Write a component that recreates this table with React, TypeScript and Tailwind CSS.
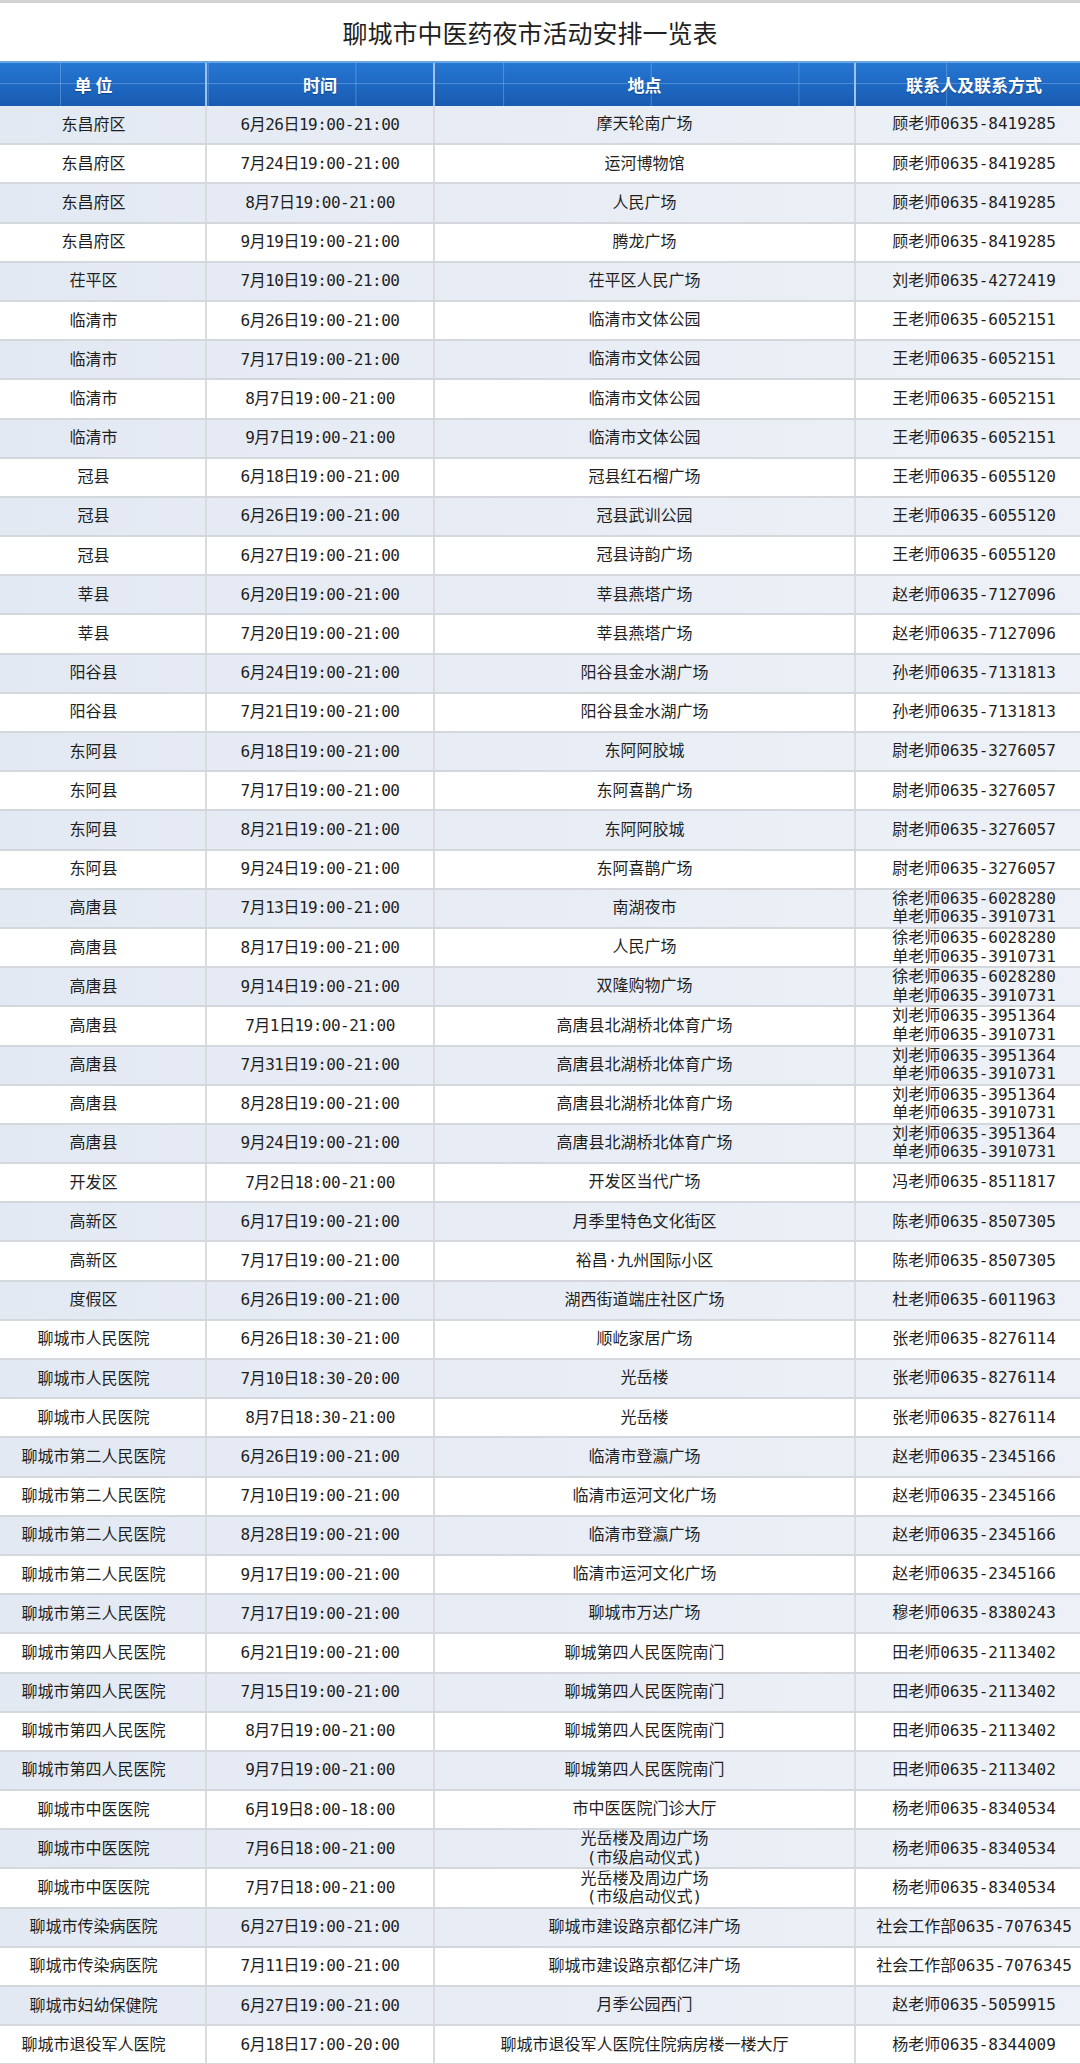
import React from "react";

type Row = [string, string, string, string];

const rows: Row[] = [
  ["东昌府区", "6月26日19:00-21:00", "摩天轮南广场", "顾老师0635-8419285"],
  ["东昌府区", "7月24日19:00-21:00", "运河博物馆", "顾老师0635-8419285"],
  ["东昌府区", "8月7日19:00-21:00", "人民广场", "顾老师0635-8419285"],
  ["东昌府区", "9月19日19:00-21:00", "腾龙广场", "顾老师0635-8419285"],
  ["茌平区", "7月10日19:00-21:00", "茌平区人民广场", "刘老师0635-4272419"],
  ["临清市", "6月26日19:00-21:00", "临清市文体公园", "王老师0635-6052151"],
  ["临清市", "7月17日19:00-21:00", "临清市文体公园", "王老师0635-6052151"],
  ["临清市", "8月7日19:00-21:00", "临清市文体公园", "王老师0635-6052151"],
  ["临清市", "9月7日19:00-21:00", "临清市文体公园", "王老师0635-6052151"],
  ["冠县", "6月18日19:00-21:00", "冠县红石榴广场", "王老师0635-6055120"],
  ["冠县", "6月26日19:00-21:00", "冠县武训公园", "王老师0635-6055120"],
  ["冠县", "6月27日19:00-21:00", "冠县诗韵广场", "王老师0635-6055120"],
  ["莘县", "6月20日19:00-21:00", "莘县燕塔广场", "赵老师0635-7127096"],
  ["莘县", "7月20日19:00-21:00", "莘县燕塔广场", "赵老师0635-7127096"],
  ["阳谷县", "6月24日19:00-21:00", "阳谷县金水湖广场", "孙老师0635-7131813"],
  ["阳谷县", "7月21日19:00-21:00", "阳谷县金水湖广场", "孙老师0635-7131813"],
  ["东阿县", "6月18日19:00-21:00", "东阿阿胶城", "尉老师0635-3276057"],
  ["东阿县", "7月17日19:00-21:00", "东阿喜鹊广场", "尉老师0635-3276057"],
  ["东阿县", "8月21日19:00-21:00", "东阿阿胶城", "尉老师0635-3276057"],
  ["东阿县", "9月24日19:00-21:00", "东阿喜鹊广场", "尉老师0635-3276057"],
  ["高唐县", "7月13日19:00-21:00", "南湖夜市", "徐老师0635-6028280\n单老师0635-3910731"],
  ["高唐县", "8月17日19:00-21:00", "人民广场", "徐老师0635-6028280\n单老师0635-3910731"],
  ["高唐县", "9月14日19:00-21:00", "双隆购物广场", "徐老师0635-6028280\n单老师0635-3910731"],
  ["高唐县", "7月1日19:00-21:00", "高唐县北湖桥北体育广场", "刘老师0635-3951364\n单老师0635-3910731"],
  ["高唐县", "7月31日19:00-21:00", "高唐县北湖桥北体育广场", "刘老师0635-3951364\n单老师0635-3910731"],
  ["高唐县", "8月28日19:00-21:00", "高唐县北湖桥北体育广场", "刘老师0635-3951364\n单老师0635-3910731"],
  ["高唐县", "9月24日19:00-21:00", "高唐县北湖桥北体育广场", "刘老师0635-3951364\n单老师0635-3910731"],
  ["开发区", "7月2日18:00-21:00", "开发区当代广场", "冯老师0635-8511817"],
  ["高新区", "6月17日19:00-21:00", "月季里特色文化街区", "陈老师0635-8507305"],
  ["高新区", "7月17日19:00-21:00", "裕昌·九州国际小区", "陈老师0635-8507305"],
  ["度假区", "6月26日19:00-21:00", "湖西街道端庄社区广场", "杜老师0635-6011963"],
  ["聊城市人民医院", "6月26日18:30-21:00", "顺屹家居广场", "张老师0635-8276114"],
  ["聊城市人民医院", "7月10日18:30-20:00", "光岳楼", "张老师0635-8276114"],
  ["聊城市人民医院", "8月7日18:30-21:00", "光岳楼", "张老师0635-8276114"],
  ["聊城市第二人民医院", "6月26日19:00-21:00", "临清市登瀛广场", "赵老师0635-2345166"],
  ["聊城市第二人民医院", "7月10日19:00-21:00", "临清市运河文化广场", "赵老师0635-2345166"],
  ["聊城市第二人民医院", "8月28日19:00-21:00", "临清市登瀛广场", "赵老师0635-2345166"],
  ["聊城市第二人民医院", "9月17日19:00-21:00", "临清市运河文化广场", "赵老师0635-2345166"],
  ["聊城市第三人民医院", "7月17日19:00-21:00", "聊城市万达广场", "穆老师0635-8380243"],
  ["聊城市第四人民医院", "6月21日19:00-21:00", "聊城第四人民医院南门", "田老师0635-2113402"],
  ["聊城市第四人民医院", "7月15日19:00-21:00", "聊城第四人民医院南门", "田老师0635-2113402"],
  ["聊城市第四人民医院", "8月7日19:00-21:00", "聊城第四人民医院南门", "田老师0635-2113402"],
  ["聊城市第四人民医院", "9月7日19:00-21:00", "聊城第四人民医院南门", "田老师0635-2113402"],
  ["聊城市中医医院", "6月19日8:00-18:00", "市中医医院门诊大厅", "杨老师0635-8340534"],
  ["聊城市中医医院", "7月6日18:00-21:00", "光岳楼及周边广场\n(市级启动仪式)", "杨老师0635-8340534"],
  ["聊城市中医医院", "7月7日18:00-21:00", "光岳楼及周边广场\n(市级启动仪式)", "杨老师0635-8340534"],
  ["聊城市传染病医院", "6月27日19:00-21:00", "聊城市建设路京都亿沣广场", "社会工作部0635-7076345"],
  ["聊城市传染病医院", "7月11日19:00-21:00", "聊城市建设路京都亿沣广场", "社会工作部0635-7076345"],
  ["聊城市妇幼保健院", "6月27日19:00-21:00", "月季公园西门", "赵老师0635-5059915"],
  ["聊城市退役军人医院", "6月18日17:00-20:00", "聊城市退役军人医院住院病房楼一楼大厅", "杨老师0635-8344009"],
];

function Lines({ text }: { text: string }) {
  const parts = text.split("\n");
  return (
    <div className="flex flex-col items-center leading-[18.5px]">
      {parts.map((p, i) => (
        <span key={i} className="whitespace-nowrap">
          {p}
        </span>
      ))}
    </div>
  );
}

export default function App() {
  return (
    <div className="w-[1080px] bg-white text-[#1f1f1f] font-['DejaVu_Sans_Mono','Noto_Sans_CJK_SC',monospace] overflow-hidden">
      <div className="h-[3px] bg-[#d2d2d2]" />
      <div className="h-[58px] flex items-center justify-center pr-[20px]">
        <h1 className="text-[25px] leading-none font-['Noto_Sans_CJK_SC',sans-serif] text-[#1f1f1f]">
          聊城市中医药夜市活动安排一览表
        </h1>
      </div>
      <div className="relative grid grid-cols-[207px_228px_421px_1fr] h-[45px] bg-gradient-to-b from-[#2677d2] via-[#1f69c3] to-[#185bb0] border-t-2 border-[#6aa6e6] text-white font-bold text-[17px] font-['Noto_Sans_CJK_SC',sans-serif] [text-shadow:0_1px_1px_rgba(0,30,80,0.45)]">
        <div className="pointer-events-none absolute inset-0 [background-image:linear-gradient(to_right,rgba(160,205,255,0.35)_1px,transparent_1px)] [background-size:147.7px_100%] [background-position:60px_0]" />
        <div className="pointer-events-none absolute left-0 right-0 top-[20px] h-px bg-[rgba(160,205,255,0.35)]" />
        <div className="relative flex items-center justify-center pr-[18px] border-r-2 border-[#9cc4ee]">单 位</div>
        <div className="relative flex items-center justify-center border-r-2 border-[#9cc4ee]">时间</div>
        <div className="relative flex items-center justify-center border-r-2 border-[#9cc4ee]">地点</div>
        <div className="relative flex items-center justify-center pl-[12px]">联系人及联系方式</div>
      </div>
      {rows.map((r, i) => (
        <div
          key={i}
          className={`grid grid-cols-[207px_228px_421px_1fr] h-[39.2px] border-b-2 border-[#d4d7dc] text-[16px] ${
            i % 2 === 0 ? "bg-gradient-to-r from-[#e3e9f3] to-[#edf1f7]" : "bg-white"
          }`}
        >
          <div className="flex items-center justify-center pr-[18px] border-r-2 border-[#d9dbdf] whitespace-nowrap">
            {r[0]}
          </div>
          <div className="flex items-center justify-center border-r-2 border-[#d9dbdf] whitespace-nowrap tracking-[-0.5px]">
            {r[1]}
          </div>
          <div className="flex items-center justify-center border-r-2 border-[#d9dbdf]">
            <Lines text={r[2]} />
          </div>
          <div className="flex items-center justify-center pl-[12px]">
            <Lines text={r[3]} />
          </div>
        </div>
      ))}
    </div>
  );
}
